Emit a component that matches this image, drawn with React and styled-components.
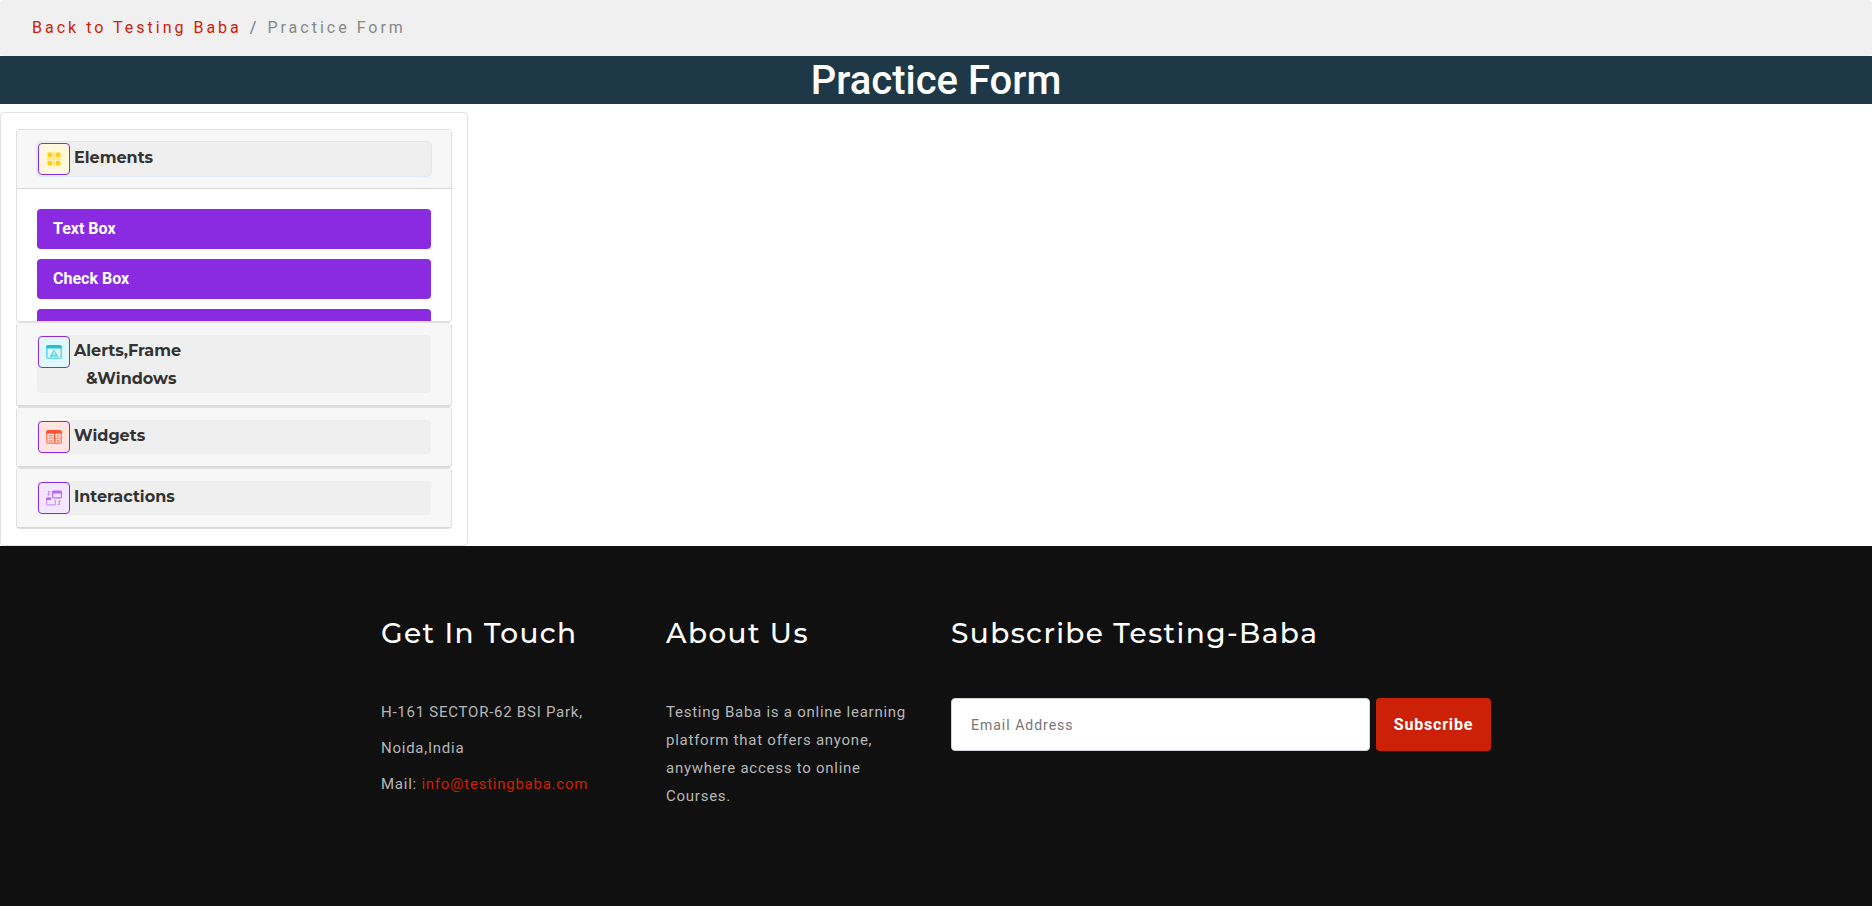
import React from "react";
import styled, { createGlobalStyle } from "styled-components";

const heading = `Montserrat, Inter, sans-serif`;

const GlobalStyle = createGlobalStyle`
  *, *::before, *::after { box-sizing: border-box; }
  body {
    margin: 0;
    background: #fff;
    color: #212529;
    font: 400 16px/24px Roboto, sans-serif;
  }
  h1, h2, p, ol, ul { margin: 0; padding: 0; }
  ol, ul { list-style: none; }
  button, input { font: inherit; }
`;

const Breadcrumb = styled.ol`
  display: flex;
  height: 56px;
  padding: 16px 32px;
  border-radius: 4px;
  background: #f0f0f0;
  color: #888;
  letter-spacing: 3px;
`;

const Crumb = styled.li`
  & + &::before {
    content: "/";
    padding: 0 8px;
    color: #6c757d;
  }
`;

const RedLink = styled.a`
  color: #cc2106;
  text-decoration: none;
`;

const PageTitle = styled.h1`
  height: 48px;
  margin-bottom: 8px;
  background: #1e3847;
  color: #fff;
  font-size: 40px;
  font-weight: 500;
  line-height: 50px;
  text-align: center;
`;

const Sidebar = styled.nav`
  width: 25%;
  min-width: 260px;
  padding: 16px 15px;
  border: 1px solid #dee2e6;
  border-radius: 4px;
`;

const Card = styled.section`
  border: 1px solid rgba(0, 0, 0, 0.125);
  border-radius: 4px;
  background: #fff;
`;

const CardHeader = styled.header`
  padding: 12px 20px;
  border-bottom: 1px solid rgba(0, 0, 0, 0.125);
  background: #f7f7f7;
`;

const Toggle = styled.button`
  display: flex;
  align-items: flex-start;
  gap: 4px;
  width: 100%;
  min-height: 34px;
  padding: 0 1px;
  border: 0;
  border-radius: 4px;
  background: #efefef;
  box-shadow: ${(p) => (p.$active ? "0 0 0 1px #dbe9f8" : "none")};
  color: #333;
  font-family: ${heading};
  font-weight: 700;
  line-height: 28px;
  text-align: left;
  cursor: pointer;
`;

const Label = styled.span`
  padding-top: 2px;
`;

const SecondLine = styled.span`
  display: block;
  padding-left: 12px;
`;

const IconBox = styled.span`
  display: flex;
  flex: none;
  align-items: center;
  justify-content: center;
  width: 32px;
  height: 32px;
  margin: 1px 0;
  border: 1px solid #8a2be2;
  border-radius: 4px;
  background: ${(p) => p.$bg};
  color: ${(p) => p.$color};
`;

const Items = styled.ul`
  display: grid;
  grid-auto-rows: 40px;
  gap: 10px;
  height: 132px;
  padding: 20px 20px 0;
  overflow: hidden;
`;

const ItemLink = styled.a`
  display: block;
  height: 40px;
  padding: 0 16px;
  border-radius: 4px;
  background: #8a2be2;
  color: #fff;
  font-weight: 700;
  line-height: 40px;
  text-decoration: none;
`;

const Footer = styled.footer`
  padding: 70px 16px 96px;
  background: #101010;
  color: #b7b7b7;
  font-size: 15px;
`;

const Columns = styled.div`
  display: grid;
  grid-template-columns: repeat(4, minmax(0, 1fr));
  column-gap: 30px;
  max-width: 1110px;
  margin: 0 auto;
`;

const Column = styled.div`
  grid-column: span ${(p) => p.$span || 1};
  letter-spacing: 0.05em;
`;

const FooterTitle = styled.h2`
  margin-bottom: 48px;
  color: #fff;
  font-family: ${heading};
  font-size: 28px;
  font-weight: 500;
  line-height: 34px;
  letter-spacing: 0.05em;
  white-space: nowrap;
`;

const Contact = styled.p`
  margin-top: -4px;
  line-height: 36px;
  white-space: nowrap;
`;

const About = styled.p`
  line-height: 28px;
`;

const SubscribeForm = styled.form`
  display: flex;
  gap: 6px;
`;

const EmailInput = styled.input`
  flex: 1;
  min-width: 0;
  height: 53px;
  padding: 0 19px;
  border: 1px solid #ced4da;
  border-radius: 4px;
  background: #fff;
  font-size: 14px;
  letter-spacing: 1px;
  &::placeholder { color: #757575; opacity: 1; }
`;

const SubscribeButton = styled.button`
  width: 115px;
  height: 53px;
  padding: 0;
  border: 0;
  border-radius: 4px;
  background: #cc2106;
  color: #fff;
  font-size: 16px;
  font-weight: 700;
  letter-spacing: 0.05em;
`;

const Svg = ({ children }) => (
  <svg width="16" height="16" viewBox="0 0 16 16" fill="currentColor" aria-hidden="true">
    {children}
  </svg>
);

const ElementsIcon = () => (
  <Svg>
    <path opacity=".4" d="M7 .5h2V7h6.5v2H9v6.5H7V9H.5V7H7z" />
    <rect x="1.5" y="1.5" width="4.8" height="4.8" rx=".8" />
    <rect x="9.7" y="1.5" width="4.8" height="4.8" rx=".8" />
    <rect x="1.5" y="9.7" width="4.8" height="4.8" rx=".8" />
    <rect x="9.7" y="9.7" width="4.8" height="4.8" rx=".8" />
  </Svg>
);

const AlertIcon = () => (
  <Svg>
    <path d="M2 1h12a2 2 0 0 1 2 2v1.6H0V3a2 2 0 0 1 2-2z" />
    <g opacity=".6">
      <path d="M0 4.6h1.6v8.8h12.8V4.6H16V13a2 2 0 0 1-2 2H2a2 2 0 0 1-2-2z" />
      <path fillRule="evenodd" d="M8 5.5 12.6 13H3.4zM7.5 8v2.6h1V8zm0 3.4v1h1v-1z" />
    </g>
  </Svg>
);

const WidgetsIcon = () => (
  <Svg>
    <path d="M2 1h12a2 2 0 0 1 2 2v1.8H0V3a2 2 0 0 1 2-2z" />
    <g opacity=".65">
      <path d="M0 4.8h1.5v8.7h13V4.8H16V13a2 2 0 0 1-2 2H2a2 2 0 0 1-2-2z" />
      <path d="M2.6 6H7v1.2H2.6zM2.6 8.6H7v1.2H2.6zM2.6 11.2H7v1.2H2.6z" />
      <path d="M9.2 8.7h5.3v1H9.2zM11 6h2.4v1.6H11zM11 10.8h2.4v2H11z" />
    </g>
    <path d="M8 4.8h1.4v8.8H8z" />
  </Svg>
);

const InteractionsIcon = () => (
  <Svg>
    <path fillRule="evenodd" d="M7.5 .5h7A1.5 1.5 0 0 1 16 2v5a1.5 1.5 0 0 1-1.5 1.5h-7A1.5 1.5 0 0 1 6 7V2A1.5 1.5 0 0 1 7.5.5zM7.2 3.5v3.8h7.6V3.5z" />
    <g opacity=".65">
      <path d="M0 9a1.5 1.5 0 0 1 1.5-1.5H5V10H1.2v4.3h7.6V10H10v4a1.5 1.5 0 0 1-1.5 1.5h-7A1.5 1.5 0 0 1 0 14z" />
      <path d="M4.5 1v1.2H3.2V4h1.3L2.6 6 .8 4H2V1zM11.5 15v-1.2h1.3V12h-1.3l1.9-2 1.8 2H14v3z" />
    </g>
    <path d="M1.5 7.5H5V10H0V9a1.5 1.5 0 0 1 1.5-1.5z" />
  </Svg>
);

const elementItems = [
  { name: "Text Box", text: "Text Box" },
  { name: "Check Box", text: "Check Box" },
  { name: "Radio Button" },
];

const sections = [
  { title: "Elements", bg: "#fff8dc", color: "#ffd00f", icon: ElementsIcon, items: elementItems },
  { title: "Alerts,Frame", second: "&Windows", bg: "#e0f8fb", color: "#22bfd8", icon: AlertIcon },
  { title: "Widgets", bg: "#ffe4df", color: "#ff5433", icon: WidgetsIcon },
  { title: "Interactions", bg: "#f5e6ff", color: "#b867fa", icon: InteractionsIcon },
];

export default function App() {
  return (
    <>
      <GlobalStyle />
      <nav aria-label="Breadcrumb">
        <Breadcrumb>
          <Crumb><RedLink href="#home">Back to Testing Baba</RedLink></Crumb>
          <Crumb aria-current="page">Practice Form</Crumb>
        </Breadcrumb>
      </nav>
      <PageTitle>Practice Form</PageTitle>
      <Sidebar aria-label="Practice sections">
        {sections.map(({ title, second, bg, color, icon: Icon, items }) => (
          <Card key={title}>
            <CardHeader>
              <Toggle type="button" $active={!!items} aria-expanded={!!items}>
                <IconBox $bg={bg} $color={color}><Icon /></IconBox>
                <Label>
                  {title}
                  {second && <SecondLine>{second}</SecondLine>}
                </Label>
              </Toggle>
            </CardHeader>
            {items && (
              <Items>
                {items.map(({ name, text }) => (
                  <li key={name}><ItemLink href="#form" aria-label={name}>{text}</ItemLink></li>
                ))}
              </Items>
            )}
          </Card>
        ))}
      </Sidebar>
      <Footer>
        <Columns>
          <Column>
            <FooterTitle>Get In Touch</FooterTitle>
            <Contact>
              H-161 SECTOR-62 BSI Park,<br />
              Noida,India<br />
              Mail: <RedLink href="mailto:info@testingbaba.com">info@testingbaba.com</RedLink>
            </Contact>
          </Column>
          <Column>
            <FooterTitle>About Us</FooterTitle>
            <About>
              Testing Baba is a online learning platform that offers anyone,
              anywhere access to online Courses.
            </About>
          </Column>
          <Column $span={2}>
            <FooterTitle>Subscribe Testing-Baba</FooterTitle>
            <SubscribeForm onSubmit={(e) => e.preventDefault()}>
              <EmailInput type="email" placeholder="Email Address" aria-label="Email Address" />
              <SubscribeButton type="submit">Subscribe</SubscribeButton>
            </SubscribeForm>
          </Column>
        </Columns>
      </Footer>
    </>
  );
}
